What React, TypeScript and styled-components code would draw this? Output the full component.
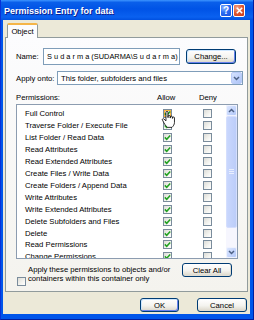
import React from "react";
import styled, { createGlobalStyle } from "styled-components";

const Global = createGlobalStyle`
  html, body { margin: 0; padding: 0; background: #ffffff; }
  body { font-family: "Liberation Sans", Arial, sans-serif; }
  * { box-sizing: border-box; }
`;

const FONT = `"Liberation Sans", Arial, sans-serif`;

const Window = styled.div`
  width: 254px;
  height: 320px;
  background: #0055ea;
  border-left: 1px solid #0831d9;
  border-right: 1px solid #001ea0;
  border-bottom: 1px solid #001ea0;
  display: flex;
  flex-direction: column;
  position: relative;
  overflow: hidden;
`;

const TitleBar = styled.div`
  height: 20px;
  flex: none;
  display: flex;
  align-items: center;
  padding: 0 8px 0 3px;
  background: linear-gradient(
    to bottom,
    #3d95ff 0%,
    #0a5fea 12%,
    #0053e6 45%,
    #0a61f0 85%,
    #0050e0 100%
  );
`;

const Title = styled.div`
  flex: 1;
  color: #fff;
  font: bold 9px ${FONT};
  text-shadow: 1px 1px 0 #0f1f8f;
  padding-top: 1px;
`;

const CapButton = styled.div<{ $close?: boolean }>`
  width: 12px;
  height: 13px;
  margin-left: 1px;
  border: 1px solid #fff;
  border-radius: 2px;
  display: flex;
  align-items: center;
  justify-content: center;
  color: #fff;
  font: bold 10px ${FONT};
  background: ${(p) =>
    p.$close
      ? "radial-gradient(circle at 30% 25%, #f2a48c 0%, #e25b33 45%, #c7381a 100%)"
      : "radial-gradient(circle at 30% 25%, #8fb8ff 0%, #2b6ef5 45%, #1a4ed8 100%)"};
`;

const Client = styled.div`
  flex: 1;
  margin: 0 3px 5px 2px;
  background: #ece9d8;
  display: flex;
  flex-direction: column;
`;

const TabStrip = styled.div`
  display: flex;
  padding: 3px 0 0 4px;
  height: 17px;
  flex: none;
`;

const Tab = styled.div`
  width: 31px;
  height: 15px;
  margin-bottom: -1px;
  position: relative;
  z-index: 1;
  border: 1px solid #919b9c;
  border-bottom: none;
  border-top: 2px solid #f5b548;
  border-radius: 2px 2px 0 0;
  background: #fcfcfe;
  font: 7.7px ${FONT};
  color: #000;
  display: flex;
  align-items: center;
  justify-content: center;
`;

const Panel = styled.div`
  margin: 0 2px;
  height: 255px;
  flex: none;
  border: 1px solid #919b9c;
  background: linear-gradient(#fcfcfe, #f4f3ee);
  padding: 10px 4px 0 10px;
  display: flex;
  flex-direction: column;
  font: 7.7px ${FONT};
  color: #000;
`;

const FieldRow = styled.div<{ $h: number; $mt: number }>`
  display: flex;
  align-items: center;
  height: ${(p) => p.$h}px;
  margin-top: ${(p) => p.$mt}px;
  flex: none;
`;

const Label = styled.span<{ $w: number }>`
  width: ${(p) => p.$w}px;
  flex: none;
  white-space: nowrap;
`;

const TextBox = styled.div`
  width: 137px;
  height: 17px;
  border: 1px solid #7f9db9;
  background: #fff;
  display: flex;
  align-items: center;
  padding-left: 3px;
  white-space: nowrap;
  overflow: hidden;
  font-size: 7.4px;
`;

const XPButton = styled.div<{ $w: number; $h?: number; $default?: boolean; $ml?: number }>`
  width: ${(p) => p.$w}px;
  height: ${(p) => p.$h ?? 15}px;
  margin-left: ${(p) => p.$ml ?? 0}px;
  flex: none;
  border: 1px solid #003c74;
  border-radius: 3px;
  background: linear-gradient(#ffffff 0%, #f4f3ef 55%, #e3e0d5 85%, #d6d0c5 100%);
  box-shadow: ${(p) =>
    p.$default
      ? "inset 1px 1px 0 #cee7ff, inset -1px -1px 0 #6982ee"
      : "inset -1px -1px 0 #e0ddd3"};
  display: flex;
  align-items: center;
  justify-content: center;
  font: 7.7px ${FONT};
  color: #000;
`;

const Combo = styled.div`
  width: 186px;
  height: 14px;
  border: 1px solid #7f9db9;
  background: #fff;
  display: flex;
  align-items: center;
  padding-left: 3px;
`;

const ComboText = styled.span`
  flex: 1;
  white-space: nowrap;
`;

const ArrowBtn = styled.div`
  width: 11px;
  height: 12px;
  border: 1px solid #b9cbf7;
  border-radius: 2px;
  background: linear-gradient(135deg, #d7e3fd 0%, #bccffb 60%, #aec4f6 100%);
  display: flex;
  align-items: center;
  justify-content: center;
`;

const HeaderRow = styled.div`
  display: grid;
  grid-template-columns: 141px 42px auto;
  height: 12px;
  margin-top: 6px;
  align-items: center;
  flex: none;
`;

const ListBox = styled.div`
  width: 222px;
  height: 155px;
  margin-top: 1px;
  border: 1px solid #8c9cb0;
  background: #fff;
  display: flex;
  flex: none;
  position: relative;
`;

const Rows = styled.div`
  flex: 1;
  padding-top: 3px;
  overflow: hidden;
`;

const Row = styled.div`
  height: 11.92px;
  display: grid;
  grid-template-columns: 138px 9px 31px 9px;
  align-items: center;
  padding-left: 8px;
  white-space: nowrap;
`;

const Box = styled.span<{ $hover?: boolean; $size?: number }>`
  width: ${(p) => p.$size ?? 9}px;
  height: ${(p) => p.$size ?? 9}px;
  border: 1px solid #7a8c9c;
  background: linear-gradient(135deg, #dcdcd7 0%, #f4f4f0 60%, #ffffff 100%);
  box-shadow: ${(p) => (p.$hover ? "inset 0 0 0 1px #f8b33e" : "none")};
  display: flex;
  align-items: center;
  justify-content: center;
`;

const ScrollBar = styled.div`
  width: 11px;
  flex: none;
  display: flex;
  flex-direction: column;
  background: #f6f6fe;
`;

const ScrollBtn = styled.div`
  height: 11px;
  flex: none;
  border: 1px solid #eef2fe;
  border-radius: 2px;
  background: linear-gradient(135deg, #dbe6fe 0%, #c3d4fc 60%, #b4c8f7 100%);
  display: flex;
  align-items: center;
  justify-content: center;
`;

const Thumb = styled.div`
  height: 112px;
  flex: none;
  border: 1px solid #d4defd;
  border-radius: 2px;
  background: linear-gradient(to right, #c9d7fd, #bccdf9);
  display: flex;
  align-items: center;
  justify-content: center;
`;

const Track = styled.div`
  flex: 1;
`;

const BottomRow = styled.div`
  display: flex;
  justify-content: space-between;
  margin-top: 4px;
  padding-right: 11px;
  flex: none;
`;

const ApplyWrap = styled.div`
  display: flex;
  align-items: flex-start;
  gap: 2px;
  padding-left: 1px;
  padding-top: 2px;
`;

const ApplyBox = styled(Box)`
  margin-top: 12px;
  flex: none;
`;

const ApplyText = styled.div`
  line-height: 9.2px;
`;

const DialogButtons = styled.div`
  display: flex;
  justify-content: flex-end;
  padding: 6px 3px 0 0;
`;

const Cursor = styled.svg`
  position: absolute;
  left: 144px;
  top: 6px;
  z-index: 5;
`;

const Check = () => (
  <svg width="7" height="7" viewBox="0 0 7 7">
    <path d="M0.8 3.4 L2.7 5.3 L6.2 1.4" fill="none" stroke="#21a121" strokeWidth="1.5" />
  </svg>
);

const Chevron = ({ up }: { up?: boolean }) => (
  <svg width="7" height="5" viewBox="0 0 7 5">
    <path
      d={up ? "M1 4 L3.5 1.5 L6 4" : "M1 1 L3.5 3.5 L6 1"}
      fill="none"
      stroke="#4d6185"
      strokeWidth="1.5"
    />
  </svg>
);

const Grip = () => (
  <svg width="5" height="6" viewBox="0 0 5 6">
    <path d="M0 0.5H5M0 2.5H5M0 4.5H5" stroke="#e9effd" strokeWidth="1" />
  </svg>
);

const perms = [
  "Full Control",
  "Traverse Folder / Execute File",
  "List Folder / Read Data",
  "Read Attributes",
  "Read Extended Attributes",
  "Create Files / Write Data",
  "Create Folders / Append Data",
  "Write Attributes",
  "Write Extended Attributes",
  "Delete Subfolders and Files",
  "Delete",
  "Read Permissions",
  "Change Permissions",
];

export default function App() {
  return (
    <>
      <Global />
      <Window>
        <TitleBar>
          <Title>Permission Entry for data</Title>
          <CapButton>?</CapButton>
          <CapButton $close>
            <svg width="7" height="7" viewBox="0 0 7 7">
              <path d="M0.8 0.8 L6.2 6.2 M6.2 0.8 L0.8 6.2" stroke="#fff" strokeWidth="1.6" />
            </svg>
          </CapButton>
        </TitleBar>
        <Client>
          <TabStrip>
            <Tab>Object</Tab>
          </TabStrip>
          <Panel>
            <FieldRow $h={17} $mt={0}>
              <Label $w={27}>Name:</Label>
              <TextBox>S u d a r m a (SUDARMA\S u d a r m a)</TextBox>
              <XPButton $w={50} $ml={6} $default>
                Change...
              </XPButton>
            </FieldRow>
            <FieldRow $h={14} $mt={6}>
              <Label $w={41}>Apply onto:</Label>
              <Combo>
                <ComboText>This folder, subfolders and files</ComboText>
                <ArrowBtn>
                  <Chevron />
                </ArrowBtn>
              </Combo>
            </FieldRow>
            <HeaderRow>
              <span>Permissions:</span>
              <span>Allow</span>
              <span>Deny</span>
            </HeaderRow>
            <ListBox>
              <Rows>
                {perms.map((p, i) => (
                  <Row key={p}>
                    <span>{p}</span>
                    <Box $hover={i === 0}>
                      <Check />
                    </Box>
                    <span />
                    <Box />
                  </Row>
                ))}
              </Rows>
              <ScrollBar>
                <ScrollBtn>
                  <Chevron up />
                </ScrollBtn>
                <Thumb>
                  <Grip />
                </Thumb>
                <Track />
                <ScrollBtn>
                  <Chevron />
                </ScrollBtn>
              </ScrollBar>
              <Cursor width="14" height="18" viewBox="0 0 17 22">
                <path
                  d="M6 1.5a1.2 1.2 0 0 1 2.4 0V8h0.3V6.5a1.2 1.2 0 0 1 2.4 0V8.5h0.3V7.5a1.2 1.2 0 0 1 2.4 0V9h0.2V8.5a1.2 1.2 0 0 1 2.4 0V14c0 2.5-1.5 4.5-3 6H8c-1.5-1-3-3-4.5-5.5L1.8 11.2a1.1 1.1 0 0 1 1.6-1.5L6 12Z"
                  fill="#fff"
                  stroke="#000"
                  strokeWidth="1"
                />
              </Cursor>
            </ListBox>
            <BottomRow>
              <ApplyWrap>
                <ApplyBox />
                <ApplyText>
                  Apply these permissions to objects and/or
                  <br />
                  containers within this container only
                </ApplyText>
              </ApplyWrap>
              <XPButton $w={50} $h={14}>
                Clear All
              </XPButton>
            </BottomRow>
          </Panel>
          <DialogButtons>
            <XPButton $w={39} $h={14} $default>
              OK
            </XPButton>
            <XPButton $w={50} $h={14} $ml={18}>
              Cancel
            </XPButton>
          </DialogButtons>
        </Client>
      </Window>
    </>
  );
}
